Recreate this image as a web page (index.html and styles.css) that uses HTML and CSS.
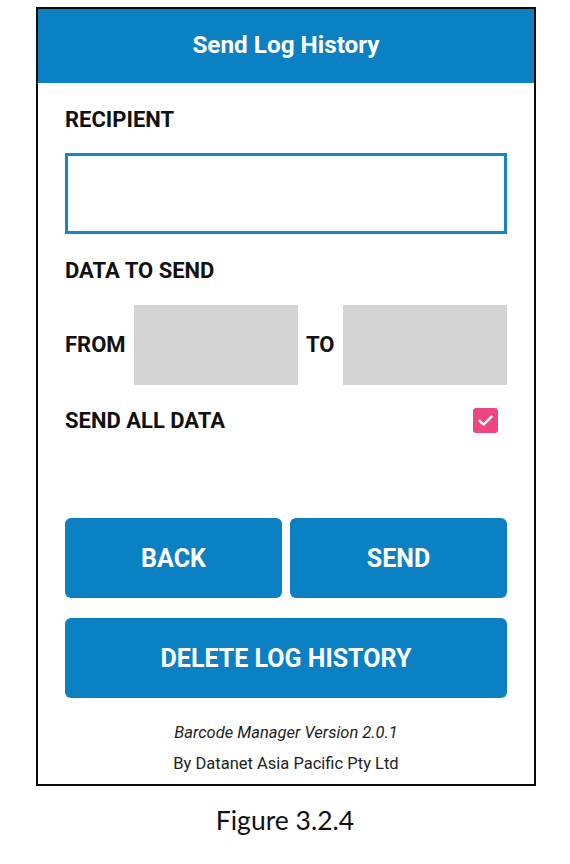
FILE: index.html
```html
<!DOCTYPE html>
<html>
<head>
<meta charset="utf-8">
<link rel="stylesheet" href="styles.css">
</head>
<body>
<div class="frame">
  <div class="header">Send Log History</div>
  <div class="content">
    <div class="label">RECIPIENT</div>
    <div class="input"></div>
    <div class="label label-data">DATA TO SEND</div>
    <div class="range">
      <div class="range-label">FROM</div>
      <div class="date-box"></div>
      <div class="range-label range-to">TO</div>
      <div class="date-box"></div>
    </div>
    <div class="all-row">
      <div class="label">SEND ALL DATA</div>
      <div class="checkbox">
        <svg viewBox="0 0 25 25" width="25" height="25"><path d="M6.5 12.8 L10.6 16.6 L18.6 8.6" fill="none" stroke="#fff" stroke-width="2.4" stroke-linecap="round" stroke-linejoin="round"/></svg>
      </div>
    </div>
    <div class="btn-row">
      <div class="btn">BACK</div>
      <div class="btn">SEND</div>
    </div>
    <div class="btn btn-wide">DELETE LOG HISTORY</div>
    <div class="foot foot-version">Barcode Manager Version 2.0.1</div>
    <div class="foot foot-by">By Datanet Asia Pacific Pty Ltd</div>
  </div>
</div>
<div class="caption">Figure 3.2.4</div>
</body>
</html>
```
FILE: styles.css
```css
html, body {
  margin: 0;
  padding: 0;
  background: #ffffff;
}
body {
  font-family: Roboto, "Liberation Sans", sans-serif;
  width: 570px;
}
.frame {
  box-sizing: border-box;
  width: 500px;
  margin: 7px 0 0 36px;
  border: 2px solid #0a0a0a;
}
.header {
  box-sizing: border-box;
  height: 74px;
  padding-bottom: 3px;
  background: #0b80c2;
  color: #ffffff;
  font-weight: 700;
  font-size: 24.3px;
  display: flex;
  align-items: center;
  justify-content: center;
}
.content {
  padding: 25px 27px 5px 27px;
}
.label {
  font-weight: 700;
  font-size: 22px;
  line-height: 24px;
  color: #111111;
}
.input {
  box-sizing: border-box;
  margin-top: 21px;
  height: 81px;
  border: 3px solid #1287c7;
}
.label-data {
  margin-top: 25px;
}
.range {
  margin-top: 22px;
  display: flex;
  align-items: center;
  height: 80px;
}
.range-label {
  width: 69px;
  font-weight: 700;
  font-size: 22px;
  line-height: 24px;
  color: #111111;
}
.range-to {
  box-sizing: border-box;
  width: 45px;
  padding-left: 8px;
}
.date-box {
  width: 164px;
  height: 80px;
  background: #d4d4d4;
}
.all-row {
  margin-top: 23px;
  height: 25px;
  display: flex;
  align-items: center;
  justify-content: space-between;
  padding-right: 9px;
}
.checkbox {
  width: 25px;
  height: 25px;
  border-radius: 3px;
  background: #ee4681;
  display: flex;
}
.btn-row {
  margin-top: 85px;
  display: flex;
  gap: 8px;
}
.btn {
  flex: 1;
  height: 80px;
  border-radius: 6px;
  background: #0b80c2;
  color: #ffffff;
  font-weight: 700;
  font-size: 25px;
  display: flex;
  align-items: center;
  justify-content: center;
}
.btn-wide {
  margin-top: 20px;
}
.foot {
  text-align: center;
  font-size: 16.5px;
  line-height: 31px;
  color: #222222;
}
.foot-version {
  margin-top: 19px;
  font-style: italic;
}
.caption {
  margin-top: 19px;
  text-align: center;
  font-family: Lato, "Open Sans", sans-serif;
  font-size: 26.5px;
  line-height: 30px;
  color: #111111;
}
```
